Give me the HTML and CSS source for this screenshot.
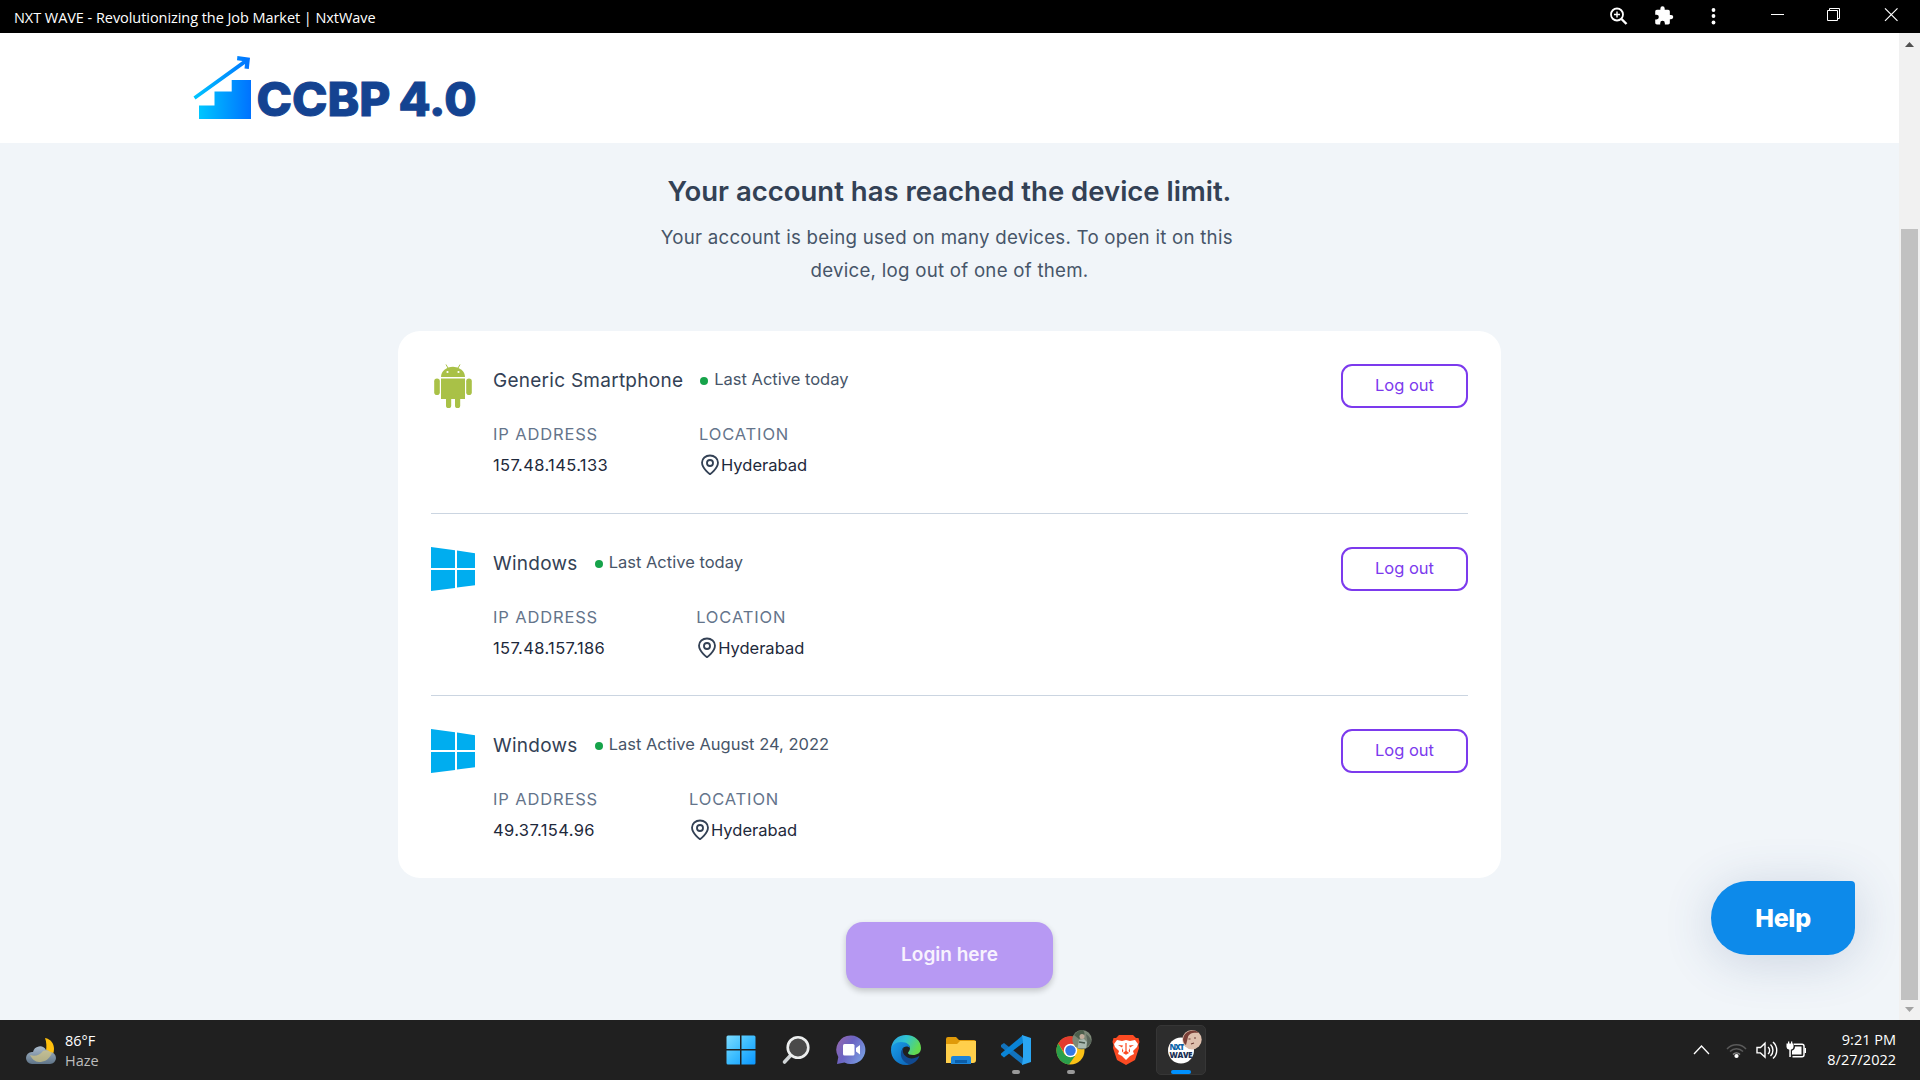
FILE: index.html
```html
<!DOCTYPE html>
<html lang="en">
<head>
<meta charset="utf-8">
<title>NXT WAVE - Revolutionizing the Job Market | NxtWave</title>
<link rel="stylesheet" href="styles.css">
</head>
<body>
<svg class="defs" width="0" height="0">
  <defs>
    <linearGradient id="winTile" x1="0" y1="0" x2="1" y2="1"><stop offset="0" stop-color="#7ddcff"/><stop offset=".5" stop-color="#3bbcff"/><stop offset="1" stop-color="#0a96ff"/></linearGradient>
    <symbol id="windows" viewBox="0 0 44 44"><path fill="#00adef" d="M0 0l24 3.3V21H0zM26 3.6l18 2.6V21H26zM0 23h24v18L0 44zM26 23h18v15.2l-18 2.4z"/></symbol>
    <symbol id="pin" viewBox="0 0 24 24"><g fill="none" stroke="#334155" stroke-width="2" stroke-linejoin="round"><path d="M12 22s-8.700-6.200-8.700-12.700a8.700 7.700 0 0 1 17.400 0C20.700 15.800 12 22 12 22z"/><circle cx="12" cy="9.800" r="3.300"/></g></symbol>
  </defs>
</svg>
<div class="screen">
  <header class="titlebar">
    <span class="window-title">NXT WAVE - Revolutionizing the Job Market | NxtWave</span>
    <svg class="window-icons" width="320" height="33" viewBox="0 0 320 33" fill="none" stroke="#fff">
      <circle cx="17" cy="14.500" r="6" stroke-width="1.800"/><path d="M21.500 19l5 5" stroke-width="2.400"/><path d="M14 14.500h6M17 11.500v6" stroke-width="1.400"/>
      <path transform="translate(53.500 5.500) scale(.86)" fill="#fff" stroke="none" d="M20.500 11H19V7c0-1.100-.9-2-2-2h-4V3.500a2.500 2.500 0 0 0-5 0V5H4c-1.100 0-2 .9-2 2v3.800h1.500a2.700 2.700 0 0 1 0 5.400H2V20c0 1.100.9 2 2 2h3.800v-1.500a2.700 2.700 0 0 1 5.400 0V22H17c1.100 0 2-.9 2-2v-4h1.500a2.500 2.500 0 0 0 0-5z"/>
      <g fill="#fff" stroke="none"><circle cx="113.500" cy="10" r="1.900"/><circle cx="113.500" cy="16" r="1.900"/><circle cx="113.500" cy="22.500" r="1.900"/></g>
      <path d="M171 14.500h13"/><path d="M227.500 10.500h10v10h-10zM229.500 10v-1.500h10v10H238"/>
      <path d="M285 8.300l12.500 12.500M297.500 8.300L285 20.800" stroke-width="1.200"/>
    </svg>
  </header>

  <div class="viewport">
    <div class="page">
      <nav class="site-header">
        <svg class="brand" width="300" height="84" viewBox="0 0 300 84">
          <defs><linearGradient id="stairs" x1="0" x2="1"><stop offset="0" stop-color="#00c6ff"/><stop offset="1" stop-color="#0072ff"/></linearGradient></defs>
          <path fill="url(#stairs)" d="M9 54.500h15.500V40.500H41.700V29H61v39H9z"/>
          <path fill="url(#stairs)" d="M3.500 45.500L52.500 10l-5.500-.7.400-4.300L60 6.700 58.800 18l-4.300-.4.500-4.600L5.500 48.500z"/>
          <text class="brand-text" x="66.500" y="65.300" textLength="134" lengthAdjust="spacingAndGlyphs">CCBP</text>
          <text class="brand-text" x="208.500" y="65.300" textLength="78" lengthAdjust="spacingAndGlyphs">4.0</text>
        </svg>
      </nav>
      <main class="content">
        <h1 class="headline">Your account has reached the device limit.</h1>
        <p class="lead">Your account is being used on many devices. To open it on this&nbsp;<br>device, log out of one of them.</p>
        <section class="card">
          <article class="device">
            <svg class="device-logo" viewBox="0 0 44 44" fill="#a9c147"><path d="M10 13a12 10.300 0 0 1 24 0z"/><path d="M15 .5l2 3.600M29 .5l-2 3.600" stroke="#a9c147"/><circle cx="16.500" cy="8" r="1.100" fill="#fff"/><circle cx="27.500" cy="8" r="1.100" fill="#fff"/><path d="M10 14.500h24V35H10z"/><rect x="3.200" y="14.500" width="5.600" height="16.500" rx="2.800"/><rect x="35.200" y="14.500" width="5.600" height="16.500" rx="2.800"/><rect x="15" y="30" width="5.200" height="14" rx="2.600"/><rect x="24" y="30" width="5.200" height="14" rx="2.600"/></svg>
            <div class="device-info">
              <div class="device-top"><h2 class="device-name">Generic Smartphone</h2><i class="dot"></i><span class="active">Last Active today</span></div>
              <dl class="facts">
                <div class="fact"><dt>IP ADDRESS</dt><dd class="ip">157.48.145.133</dd></div>
                <div class="fact"><dt>LOCATION</dt><dd><svg class="pin"><use href="#pin"/></svg><span class="city">Hyderabad</span></dd></div>
              </dl>
            </div>
            <button class="logout">Log out</button>
          </article>
          <article class="device">
            <svg class="device-logo"><use href="#windows"/></svg>
            <div class="device-info">
              <div class="device-top"><h2 class="device-name">Windows</h2><i class="dot"></i><span class="active">Last Active today</span></div>
              <dl class="facts">
                <div class="fact"><dt>IP ADDRESS</dt><dd class="ip">157.48.157.186</dd></div>
                <div class="fact"><dt>LOCATION</dt><dd><svg class="pin"><use href="#pin"/></svg><span class="city">Hyderabad</span></dd></div>
              </dl>
            </div>
            <button class="logout">Log out</button>
          </article>
          <article class="device">
            <svg class="device-logo"><use href="#windows"/></svg>
            <div class="device-info">
              <div class="device-top"><h2 class="device-name">Windows</h2><i class="dot"></i><span class="active">Last Active August 24, 2022</span></div>
              <dl class="facts">
                <div class="fact"><dt>IP ADDRESS</dt><dd class="ip">49.37.154.96</dd></div>
                <div class="fact"><dt>LOCATION</dt><dd><svg class="pin"><use href="#pin"/></svg><span class="city">Hyderabad</span></dd></div>
              </dl>
            </div>
            <button class="logout">Log out</button>
          </article>
        </section>
        <button class="login">Login here</button>
      </main>
      <button class="help">Help</button>
    </div>
    <div class="scrollbar">
      <svg class="arrow" width="9" height="5" viewBox="0 0 9 5"><path fill="#505050" d="M4.500 0L9 5H0z"/></svg>
      <div class="thumb"></div>
      <svg class="arrow" width="9" height="5" viewBox="0 0 9 5"><path fill="#a3a3a3" d="M4.500 5L0 0h9z"/></svg>
    </div>
  </div>

  <footer class="taskbar">
    <div class="weather">
      <svg width="30" height="30" viewBox="0 0 30 30">
        <defs><linearGradient id="cloud" x1="0" y1="0" x2="0" y2="1"><stop offset="0" stop-color="#a9bacb"/><stop offset="1" stop-color="#5f7488"/></linearGradient></defs>
        <path fill="#ffc00d" d="M19 1c6 1 9 6 9 11 0 8-6 13-13 13 5-5 7-16 4-24z"/>
        <path fill="url(#cloud)" d="M6 27a6 6 0 0 1 0-12h1a7 7 0 0 1 13-2 6 6 0 0 1 4 2 6 6 0 0 1 0 12z"/>
        <path fill="#d8c981" opacity=".65" d="M4 18c5 2 10 0 13-4 4-1 7 0 9 2-3 7-8 9-13 9-4 0-7-3-9-7z"/>
      </svg>
      <div class="weather-text"><span>86°F</span><span class="weather-sky">Haze</span></div>
    </div>
    <div class="apps">
      <div class="app"><svg width="30" height="30" viewBox="0 0 30 30" fill="url(#winTile)"><path d="M.5 2q0-1.500 1.500-1.500h12V14H.500zM15.500.500h12.500q1.500 0 1.500 1.500v12h-14zM.5 15.500H14v14H2q-1.500 0-1.500-1.500zM15.500 15.500h14V28q0 1.500-1.500 1.500H15.500z"/></svg></div>
      <div class="app"><svg width="30" height="30" viewBox="0 0 30 30"><path d="M10 20l-6.500 7" stroke="#d0d4d6" stroke-width="3.600" stroke-linecap="round"/><circle cx="17" cy="12.500" r="10.300" fill="#4a4a4a" stroke="#eceeee" stroke-width="2.600"/></svg></div>
      <div class="app"><svg width="30" height="30" viewBox="0 0 30 30"><defs><linearGradient id="chat" x1="0" x2="1" y2=".6"><stop offset="0" stop-color="#9a68ab"/><stop offset=".5" stop-color="#6b63c2"/><stop offset="1" stop-color="#7798df"/></linearGradient></defs><path fill="url(#chat)" d="M15 .5A14.300 14.300 0 1 1 8.500 27.500L1 29l1.300-7A14.300 14.300 0 0 1 15 .5z"/><rect x="7" y="9" width="11.500" height="11.500" rx="1.500" fill="#fff"/><path fill="#fff" d="M20 13l4-3v9.500l-4-3z"/></svg></div>
      <div class="app"><svg width="30" height="30" viewBox="0 0 30 30"><defs><linearGradient id="edgeTop" x1="0" x2="1" y2=".4"><stop offset="0" stop-color="#2b9ee0"/><stop offset=".5" stop-color="#30c4d2"/><stop offset="1" stop-color="#62da4f"/></linearGradient><linearGradient id="edgeSide" x1="0" y1="0" x2="1" y2="1"><stop offset="0" stop-color="#1aa0ea"/><stop offset="1" stop-color="#0b62b6"/></linearGradient></defs><path fill="url(#edgeTop)" d="M0 14C1 5 7 0 15 0c9 0 15 6 15 13 0 5-4 7-8 7-3 0-5-1-5-2s2-2 2-5c0-3-4-5-8-5S2 10 0 14z"/><path fill="url(#edgeSide)" d="M0 15c0-5 5-8 10-8 6 0 9 3 9 6-1-1-2-1.500-3.500-1.500-4 0-6 4-4 9 1.500 4 5 7 8.500 8.500-2 .8-3.500 1-5 1C6 30 0 23 0 15z"/><path fill="#114a91" d="M13 12.500c-2 3-1 6 1 8 3 3.500 9 4 13.500.800.8-.5 1 .2.600.8C26 26 23 28.500 20 29.300 12 29 6 19 13 12.500z"/></svg></div>
      <div class="app"><svg width="32" height="30" viewBox="0 0 32 30"><path fill="#e09a09" d="M1 5V4q0-2 2-2h8l3 3h15q2 0 2 2v5H1z"/><path fill="#ffcf4b" d="M1 9h11l3-3h16v19q0 3-3 3H1z"/><path fill="#1c84d8" d="M6 29v-6q0-2 2-2h16q2 0 2 2v6z"/><path fill="#0b5da8" d="M10 25h12v3H10z"/></svg></div>
      <div class="app"><svg width="30" height="30" viewBox="0 0 30 30"><path fill="#1273bd" d="M0 10l3-2 19 15v7L0 12z"/><path fill="#0a84d6" d="M0 20l3 2.500L22 8V0L0 18.500z"/><path fill="#2aa5f2" d="M21 0l9 3v24l-9 3 1-7V7z"/></svg><i class="run"></i></div>
      <div class="app"><svg class="with-avatar" width="36" height="36" viewBox="0 0 36 36"><circle cx="14.500" cy="20.500" r="14" fill="#fbc116"/><path fill="#e33b2e" d="M2.300 13.500A14 14 0 0 1 27 14H14.500l-6 9z"/><path fill="#2a9f4b" d="M2.300 13.500L9 25l10 1-6 8.500A14 14 0 0 1 2.300 13.500z"/><circle cx="14.500" cy="20.500" r="6.700" fill="#fff"/><circle cx="14.500" cy="20.500" r="5.200" fill="#3478e6"/><circle cx="26" cy="9.700" r="9.700" fill="#7c8877"/><path d="M18 5q4-5 9-5 3 4 0 6l-4 3z" fill="#4c5f4c"/><path d="M30 4q6 4 5 9l-4 4q1-7-1-13z" fill="#59665a"/><circle cx="26" cy="6.500" r="2.500" fill="#c2ae9c"/><path d="M21.500 18l1.500-8 5-1 3 3-1 6z" fill="#a9b9b0"/><path d="M23 12l6 1" stroke="#46564b" stroke-width="1.500"/></svg><i class="run"></i></div>
      <div class="app"><svg width="30" height="30" viewBox="0 0 30 30"><path fill="#fb4a22" d="M8 0h14l3 3h2.500l1 4-1 3 .5 3-4 12-9 5-9-5L2 13l.5-3-1-3 1-4H5z"/><path fill="#fff" d="M6 5l5 1 4-1 4 1 5-1 3 4-1 3-4 4 1 3-4 2-4 4-4-4-4-2 1-3-4-4-1-3z"/><path fill="#fb4a22" d="M7 10l5 .6-1 2zM23 10l-5 .6 1 2zM14.400 8h1.200v8l2.500 2-3.100 1.800L11.900 18l2.500-2zM11 13l1.500 3-1.500 1.500zM19 13l-1.500 3 1.500 1.500z"/></svg></div>
      <div class="app app-current"><svg class="with-avatar" width="36" height="36" viewBox="0 0 36 36"><circle cx="15" cy="20.500" r="13" fill="#fff"/><text class="nxt nxt-top" x="3.500" y="19.500" textLength="15">NXT</text><text class="nxt" x="3.500" y="27.500" textLength="23">WAVE</text><circle cx="26" cy="9.700" r="9.700" fill="#dfc0ae"/><path d="M17 9a9.700 9.700 0 0 1 16-6c-5-1-10 0-11 4l-2 8c-2-1-3-4-3-6z" fill="#7b4038"/><path d="M22.500 9h2M28 8h2M25 14l3-1" stroke="#6d3a32" stroke-width="1.200"/></svg><i class="run run-current"></i></div>
    </div>
    <div class="tray">
      <svg width="116" height="26" viewBox="0 0 116 26" fill="none" stroke="#fff" stroke-width="1.300">
        <path d="M1 17l7.500-8 7.500 8"/>
        <g stroke="#5a5a5a" stroke-width="1.500"><path d="M34 12a13 13 0 0 1 19 0M37 14.500a9 9 0 0 1 13 0"/><path d="M40 17.500a5 5 0 0 1 7 0" stroke="#8a8a8a"/></g><circle cx="43.500" cy="19" r="2.100" fill="#fff" stroke="none"/>
        <path d="M64 10.500h3.500l4.500-4.300v14l-4.500-4.300H64zM75 10a4.500 4.500 0 0 1 0 7M77.500 7.500a8 8 0 0 1 0 11.500M80 5a11 11 0 0 1 0 16.500" stroke-width="1.400"/>
        <path d="M101 7.300h8q2 0 2 2v8.400q0 2-2 2h-9.500" stroke-width="1.500"/><path fill="#fff" stroke="none" d="M102 9.500h6.500v8H99v-3.800q3-1 3-4.200zM111.500 11h1.500v5h-1.500zM93.500 6.500h7V10q0 2.300-2.700 2.800V20h-1.500v-7.200q-2.800-.5-2.800-2.800zM95 4.500h1.300v2.500H95zM98 4.500h1.300v2.500H98z"/>
      </svg>
      <div class="clock"><span class="time">9:21 PM</span><span class="date">8/27/2022</span></div>
    </div>
  </footer>
</div>
</body>
</html>
```
FILE: styles.css
```css
* { box-sizing: border-box; }
body { margin: 0; overflow: hidden; font-family: Inter, sans-serif; background: #f1f5f9; }
h1, h2, p, dl, dd { margin: 0; }
button { font-family: inherit; padding: 0; border: 0; }
.defs { position: absolute; }
.screen { display: flex; flex-direction: column; width: 1920px; height: 1080px; }

.titlebar { display: flex; justify-content: space-between; height: 33px; background: #000; color: #fff; padding-left: 14px; font-family: "Open Sans", sans-serif; }
.window-title { font-size: 14.500px; line-height: 35px; letter-spacing: -.055px; white-space: nowrap; }

.viewport { display: flex; height: 987px; }
.page { position: relative; width: 1899px; background: #f1f5f9; overflow: hidden; }
.site-header { height: 110px; background: #fff; padding: 18px 0 0 190px; }
.brand { display: block; }
.brand-text { font-family: Inter, sans-serif; font-weight: 800; font-size: 46px; fill: #144391; stroke: #144391; stroke-width: 1; }

.content { display: flex; flex-direction: column; align-items: center; }
.headline { margin-top: 28px; font-size: 27.500px; line-height: 40px; font-weight: 600; color: #334155; white-space: nowrap; }
.lead { margin-top: 10px; font-size: 18.700px; line-height: 33px; color: #475569; text-align: center; white-space: nowrap; letter-spacing: .245px; }

.card { width: 1103px; height: 547px; margin-top: 44px; padding: 33px; border-radius: 22px; background: #fff; }
.device { display: flex; height: 149.500px; border-bottom: 1px solid #cbd5e1; margin-bottom: 33px; }
.device:first-child { height: 150px; }
.device:nth-child(2) { height: 149px; }
.device:last-child { border-bottom: 0; margin-bottom: 0; }
.device-logo { width: 44px; height: 44px; flex: none; margin-right: 18px; }
.device-info { flex: 1; }
.device-top { display: flex; align-items: center; height: 33px; }
.device-name { font-size: 19px; font-weight: 400; color: #334155; letter-spacing: .26px; }
.dot { width: 8px; height: 8px; border-radius: 50%; background: #16a34a; margin: 0 6px 0 17px; }
.active { font-size: 16.500px; color: #475569; padding-bottom: 3px; }
.facts { display: flex; gap: 91px; margin-top: 23px; }
.facts dt { font-size: 16.500px; line-height: 28px; color: #64748b; letter-spacing: .85px; }
.facts dd { display: flex; align-items: center; height: 33px; font-size: 16.500px; color: #1e293b; }
.facts .ip { letter-spacing: .36px; }
.pin { width: 22px; height: 22px; }
.logout { width: 127px; height: 44px; padding-bottom: 2px; border: 2px solid #7c3aed; border-radius: 11px; background: #fff; color: #7c3aed; font-size: 16.500px; }

.login { width: 207px; height: 66px; margin-top: 44px; padding-bottom: 2px; border-radius: 17px; background: #b799f3; color: #f7f2fe; font-size: 19px; font-weight: 600; box-shadow: 0 3px 6px rgba(0,0,0,.2); }
.help { position: absolute; right: 44px; bottom: 65px; width: 144px; height: 74px; border-radius: 37px 4px 27px 37px; background: #0d8aea; color: #fff; font-size: 25px; font-weight: 800; letter-spacing: -.3px; box-shadow: 0 6px 50px rgba(50,80,130,.2); }

.scrollbar { display: flex; flex-direction: column; align-items: center; width: 21px; background: #f1f1f1; }
.arrow { display: block; flex: none; margin-top: 9px; }
.thumb { width: 17px; height: 771px; flex: none; margin-top: 182px; background: #c1c1c1; }
.thumb + .arrow { margin-top: 7px; }

.taskbar { display: grid; grid-template-columns: 1fr auto 1fr; height: 60px; background: #202020; color: #fff; font-family: "Open Sans", sans-serif; font-size: 14.500px; line-height: 20px; }
.weather { display: flex; gap: 9px; padding: 11px 0 0 26px; }
.weather svg { margin-top: 6px; }
.weather-text { display: flex; flex-direction: column; }
.weather-sky { color: #bdbdbd; }
.apps { display: flex; gap: 5px; padding: 5px 0 0 2px; }
.app { position: relative; display: flex; align-items: center; justify-content: center; width: 50px; height: 50px; }
.app-current { background: #2d2d2d; border-radius: 5px; border: 1px solid #363636; }
.with-avatar { margin: -5px 0 0 5px; }
.run { position: absolute; bottom: 1px; left: 21px; width: 8px; height: 4px; border-radius: 2px; background: #999; }
.run-current { bottom: 0; left: 14px; width: 20px; background: #0091ff; }
.nxt { font-family: "Open Sans", sans-serif; font-weight: 800; font-size: 8px; fill: #1b3056; }
.nxt-top { fill: #0a64a8; }
.tray { display: flex; justify-content: flex-end; gap: 18px; padding: 10px 24px 0 0; }
.tray svg { margin-top: 7px; }
.clock { display: flex; flex-direction: column; align-items: flex-end; }
```
